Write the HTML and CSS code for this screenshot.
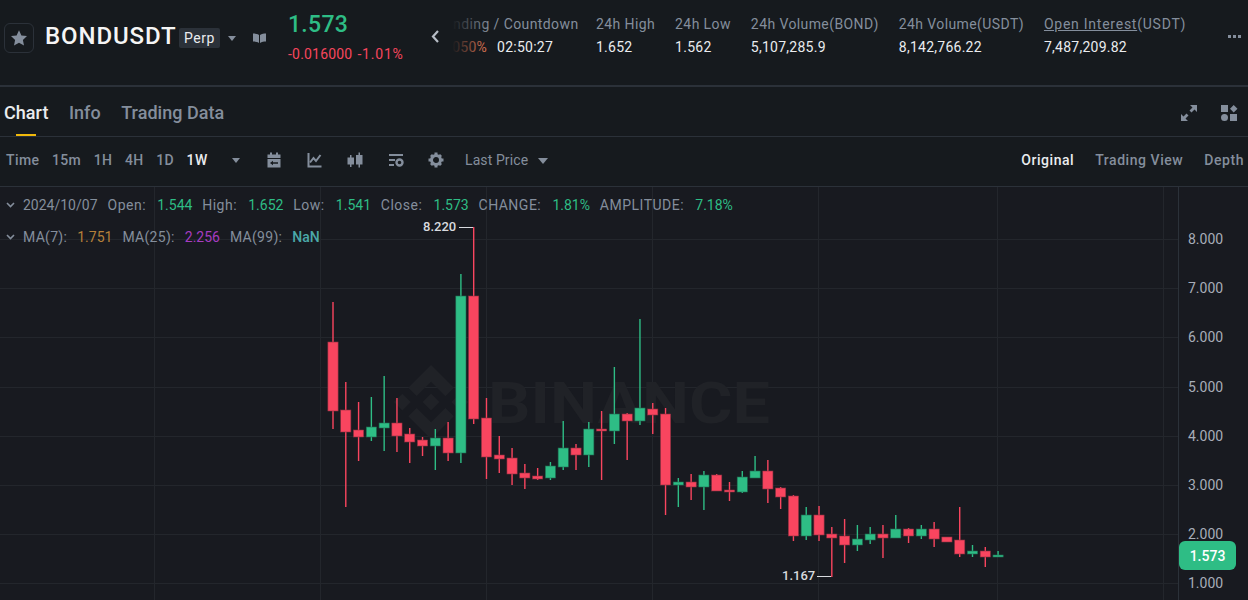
FILE: index.html
```html
<!DOCTYPE html>
<html>
<head>
    <meta charset="utf-8">
    <title>BONDUSDT Perp</title>
    <link rel="stylesheet" href="styles.css">
</head>
<body>
    <div class="ticker">
        <button class="star-btn">
            <svg width="18" height="18" viewBox="0 0 18 18"><path d="M9 1.2l2.4 5.2 5.6.7-4.1 3.9 1.1 5.6L9 13.8l-5 2.8 1.1-5.6L1 7.1l5.6-.7z" fill="#848e9c"/></svg>
        </button>
        <div class="symbol">BONDUSDT</div>
        <div class="perp">Perp</div>
        <div class="caret caret-header"></div>
        <svg class="book" width="13" height="10" viewBox="0 0 13 10"><path d="M0 0.5c2 0 4.300.3 6 1.500v8c-1.700-1.100-4-1.500-6-1.500zM13 .5c-2 0-4.300.3-6 1.500v8c1.700-1.100 4-1.500 6-1.500z" fill="#848e9c"/></svg>
        <div class="last-price">
            <div class="price-big">1.573</div>
            <div class="price-change"><span>-0.016000</span><span class="change-pct">-1.01%</span></div>
        </div>
        <svg class="back" width="9" height="13" viewBox="0 0 9 13"><path d="M7 1L2 6.500l5 5.500" fill="none" stroke="#b7bdc6" stroke-width="2.200"/></svg>
        <div class="stats-view">
            <div class="stats">
                <div class="stat stat-funding">
                    <div class="stat-name">Funding / Countdown</div>
                    <div class="stat-value"><span class="funding-rate">0.0050%</span><span>02:50:27</span></div>
                </div>
                <div class="stat">
                    <div class="stat-name">24h High</div>
                    <div class="stat-value">1.652</div>
                </div>
                <div class="stat">
                    <div class="stat-name">24h Low</div>
                    <div class="stat-value">1.562</div>
                </div>
                <div class="stat">
                    <div class="stat-name">24h Volume(BOND)</div>
                    <div class="stat-value">5,107,285.9</div>
                </div>
                <div class="stat">
                    <div class="stat-name">24h Volume(USDT)</div>
                    <div class="stat-value">8,142,766.22</div>
                </div>
                <div class="stat">
                    <div class="stat-name stat-oi"><u>Open Interest</u>(USDT)</div>
                    <div class="stat-value">7,487,209.82</div>
                </div>
            </div>
        </div>
        <div class="more"><i></i><i></i><i></i></div>
    </div>

    <div class="tabs">
        <div class="tab tab-active">Chart</div>
        <div class="tab">Info</div>
        <div class="tab">Trading Data</div>
        <div class="tab-icons">
            <svg width="16" height="16" viewBox="0 0 16 16"><path d="M9 0h7v7l-2.500-2.500-3 3-2-2 3-3zM7 16H0V9l2.500 2.500 3-3 2 2-3 3z" fill="#848e9c"/></svg>
            <svg width="17" height="16" viewBox="0 0 17 16"><path d="M0 0h7v7H0zM0 12.500a3.500 3.500 0 1 1 7 0 3.500 3.500 0 0 1-7 0zM9 9h7v7H9zM12.700 0l3.800 3.700-3.800 3.800-3.700-3.800z" fill="#848e9c"/></svg>
        </div>
    </div>

    <div class="toolbar">
        <div class="intervals">
            <span class="time-label">Time</span>
            <span>15m</span>
            <span>1H</span>
            <span>4H</span>
            <span>1D</span>
            <span class="interval-active">1W</span>
        </div>
        <div class="caret caret-interval"></div>
        <div class="tools">
            <svg width="16" height="16" viewBox="0 0 16 16"><path d="M1.500 2.500h2.500V.5h2v2h4v-2h2v2h2.500V6h-13zM1.500 7h13v8.500h-13zM4 11l3 2.300v-1.600h5v-1.500H7V8.700z" fill="#848e9c" fill-rule="evenodd"/></svg>
            <svg width="16" height="16" viewBox="0 0 16 16"><path d="M2.500 1v13.500H15.500" fill="none" stroke="#848e9c" stroke-width="2"/><path d="M4 10.500L7.500 6l2.500 3L14.500 3" fill="none" stroke="#848e9c" stroke-width="2"/></svg>
            <svg width="18" height="16" viewBox="0 0 18 16"><path d="M4 3h1.500v2.500H8v7H5.500V15H4v-2.500H1.500v-7H4zM12.500.5H14V3h2.500v9.500H14V15.500h-1.500v-3H10V3h2.500z" fill="#848e9c"/></svg>
            <svg width="16" height="16" viewBox="0 0 16 16"><path d="M1 2h14v2H1zM1 7h6v2H1zM1 12h5v2H1z" fill="#848e9c"/><circle cx="11.500" cy="10.500" r="3" fill="none" stroke="#848e9c" stroke-width="2.400"/></svg>
            <svg width="16" height="16" viewBox="0 0 16 16"><circle cx="8" cy="8" r="4.500" fill="none" stroke="#848e9c" stroke-width="3"/><path d="M6.500.5h3v3h-3zM6.500 12.500h3v3h-3zM.5 6.500h3v3h-3zM12.500 6.500h3v3h-3zM2 4l2-2 2 2-2 2zM10 4l2-2 2 2-2 2zM2 12l2-2 2 2-2 2zM10 12l2-2 2 2-2 2z" fill="#848e9c"/></svg>
        </div>
        <div class="price-type">Last Price</div>
        <div class="caret caret-price"></div>
        <div class="views">
            <span class="view-active">Original</span>
            <span>Trading View</span>
            <span>Depth</span>
        </div>
    </div>

    <div class="chart">
        <svg id="plot" class="plot" viewBox="0 187 1248 413" width="1248" height="413"></svg>
        <div class="legend">
            <div class="legend-row">
                <svg class="fold" width="9" height="6" viewBox="0 0 9 6"><path d="M1 1l3.500 3.500L8 1" fill="none" stroke="#848e9c" stroke-width="1.600"/></svg>
                <span class="legend-date">2024/10/07</span>
                <span class="lbl">Open:</span><span class="up">1.544</span>
                <span class="lbl">High:</span><span class="up">1.652</span>
                <span class="lbl">Low:</span><span class="up">1.541</span>
                <span class="lbl">Close:</span><span class="up">1.573</span>
                <span class="lbl">CHANGE:</span><span class="up">1.81%</span>
                <span class="lbl">AMPLITUDE:</span><span class="up">7.18%</span>
            </div>
            <div class="legend-row legend-ma">
                <svg class="fold" width="9" height="6" viewBox="0 0 9 6"><path d="M1 1l3.500 3.500L8 1" fill="none" stroke="#848e9c" stroke-width="1.600"/></svg>
                <span class="lbl">MA(7):</span><span class="ma7">1.751</span>
                <span class="lbl">MA(25):</span><span class="ma25">2.256</span>
                <span class="lbl">MA(99):</span><span class="ma99">NaN</span>
            </div>
        </div>
    </div>
    <script src="chart.js"></script>
</body>
</html>
```

FILE: styles.css
```css
* {
    box-sizing: border-box;
}

html, body {
    margin: 0;
    height: 600px;
    overflow: hidden;
}

body {
    font-family: Roboto, "Liberation Sans", sans-serif;
    font-size: 14px;
    background-color: #161a1e;
    color: #eaecef;
}

/* top ticker */
.ticker {
    display: flex;
    align-items: center;
    height: 87px;
    padding-left: 4px;
    border-bottom: 2px solid #2b3139;
}

.star-btn {
    display: flex;
    align-items: center;
    justify-content: center;
    width: 30px;
    height: 30px;
    margin-top: -10px;
    padding: 0;
    background: none;
    border: 1px solid #2b3139;
    border-radius: 6px;
}

.symbol {
    margin: -14px 0 0 11px;
    width: 134px;
    font-size: 24px;
    font-weight: 500;
    letter-spacing: 0.9px;
    color: #f5f5f5;
    white-space: nowrap;
}

.perp {
    width: 41px;
    height: 20px;
    margin-top: -10px;
    line-height: 20px;
    text-align: center;
    letter-spacing: 0.6px;
    background-color: #2b3139;
    border-radius: 2px;
}

.caret {
    width: 0;
    height: 0;
    border-left: 4.5px solid transparent;
    border-right: 4.5px solid transparent;
    border-top: 5px solid #848e9c;
}

.caret-header {
    margin: -9px 0 0 8px;
}

.book {
    margin: -10px 0 0 17px;
}

.last-price {
    margin: -12px 0 0 22px;
    width: 143px;
}

.price-big {
    font-size: 23px;
    font-weight: 500;
    letter-spacing: 0.3px;
    color: #2ebd85;
    line-height: 28px;
}

.price-change {
    display: flex;
    gap: 5px;
    margin-top: 7px;
    letter-spacing: 0.2px;
    color: #f6465d;
}

.change-pct {
    letter-spacing: 0.8px;
}

.back {
    margin-top: -12px;
}

.stats-view {
    position: relative;
    width: 764px;
    margin: -14px 0 0 8px;
    overflow: hidden;
}

.stats-view::before {
    content: "";
    position: absolute;
    left: 0;
    top: 0;
    bottom: 0;
    width: 42px;
    background: linear-gradient(to right, #161a1e 10%, rgba(22, 26, 30, 0));
}

.stats {
    display: flex;
    gap: 20px;
    margin-left: -11px;
    white-space: nowrap;
}

.stat-name {
    color: #848e9c;
    line-height: 18px;
    margin-bottom: 5px;
    letter-spacing: 0.4px;
}

.stat-oi {
    letter-spacing: 0.75px;
}

.stat-value {
    line-height: 18px;
    letter-spacing: 0.25px;
}

.stat-funding {
    flex: 0 0 139px;
    width: 139px;
}

.stat-funding .stat-name {
    text-align: right;
    padding-right: 2px;
}

.stat-funding .stat-value {
    margin-left: -5px;
}

.funding-rate {
    color: #f0805a;
    margin-right: 10px;
}

.more {
    display: flex;
    gap: 2px;
    margin: -12px 7px 0 auto;
}

.more i {
    width: 3px;
    height: 3px;
    background-color: #848e9c;
}

/* Chart / Info / Trading Data */
.tabs {
    display: flex;
    align-items: center;
    gap: 20.5px;
    height: 50px;
    padding: 2px 0 0 4px;
    border-bottom: 1px solid #2b3139;
    font-size: 18px;
    font-weight: 500;
    letter-spacing: 0.03px;
    color: #848e9c;
}

.tab {
    position: relative;
}

.tab-active {
    color: #eaecef;
}

.tab-active::after {
    content: "";
    position: absolute;
    left: 12px;
    bottom: -13px;
    width: 20px;
    height: 2px;
    background-color: #f0b90b;
}

.tab-icons {
    display: flex;
    gap: 24px;
    margin-left: auto;
    padding-right: 10px;
}

/* interval row */
.toolbar {
    display: flex;
    align-items: center;
    height: 50px;
    padding: 0 0 3px 6px;
    border-bottom: 1px solid #2b3139;
    color: #848e9c;
    font-weight: 500;
}

.intervals {
    display: flex;
    gap: 12.5px;
    width: 226px;
    letter-spacing: 0.4px;
}

.interval-active {
    color: #eaecef;
}

.caret-interval {
    border-left-width: 4px;
    border-right-width: 4px;
}

.tools {
    display: flex;
    gap: 24px;
    margin-left: 26px;
}

.price-type {
    margin-left: 21px;
    font-weight: 400;
    letter-spacing: 0.1px;
}

.caret-price {
    margin: 1px 0 0 10px;
    border-left-width: 5px;
    border-right-width: 5px;
    border-top-width: 6px;
}

.views {
    display: flex;
    gap: 21px;
    margin-left: auto;
    padding-right: 4px;
    letter-spacing: 0.55px;
}

.view-active {
    color: #eaecef;
}

/* plot area */
.chart {
    position: relative;
    height: 413px;
    background-color: #181a20;
}

.plot {
    position: absolute;
    left: 0;
    top: 0;
    display: block;
}

.plot text {
    font-family: Roboto, "Liberation Sans", sans-serif;
}

.grid-line {
    stroke: #23262c;
    stroke-width: 1;
}

.axis-line {
    stroke: #2b3139;
    stroke-width: 1;
}

.mark {
    fill: #202227;
}

.mark-text {
    font-size: 58px;
    font-weight: 700;
}

.wick-up, .body-up {
    fill: #2ebd85;
}

.wick-down, .body-down {
    fill: #f9455f;
}

.body-up {
    stroke: #1e6a50;
    stroke-width: 0.6;
}

.body-down {
    stroke: #8a3040;
    stroke-width: 0.6;
}

.axis-label {
    font-size: 14px;
    fill: #a7adb8;
}

.peak-label {
    font-size: 13px;
    font-weight: 500;
    fill: #d8dadf;
}

.peak-line {
    stroke: #d8dadf;
    stroke-width: 1;
}

.tag {
    fill: #2ebd85;
}

.tag-text {
    font-size: 14px;
    font-weight: 500;
    fill: #ffffff;
    text-anchor: middle;
}

.legend {
    position: absolute;
    left: 6px;
    top: 9px;
    color: #848e9c;
}

.legend-row {
    display: flex;
    align-items: center;
    height: 18px;
    margin-bottom: 14px;
    white-space: nowrap;
}

.fold {
    margin-right: 8px;
}

.legend-date {
    margin-right: 10px;
}

.lbl {
    margin-right: 11.2px;
    letter-spacing: 0.5px;
}

.legend-ma .lbl {
    margin-right: 10px;
    letter-spacing: 0.3px;
}

.up {
    color: #2ebd85;
    margin-right: 9.8px;
}

.ma7 {
    color: #b5803a;
    margin-right: 10px;
}

.ma25 {
    color: #a63cc0;
    margin-right: 10px;
}

.ma99 {
    color: #4ba8a8;
    font-weight: 500;
}
```

FILE: chart.js
```js
// weekly candles, page pixels: [wick top, body top, body bottom, wick bottom, up?]
const candles = [
    [302, 342, 411, 429, 0], [382, 410, 432, 507, 0], [402, 430, 437, 461, 0],
    [397, 427, 437, 441, 1], [376, 423, 428, 451, 1], [398, 423, 436, 452, 0],
    [428, 434, 442, 463, 0], [437, 440, 446, 456, 0], [429, 438, 446, 470, 1],
    [422, 438, 453, 461, 0], [274, 296, 453, 463, 1], [227, 296, 419, 424, 0],
    [398, 418, 457, 479, 0], [436, 455, 459, 473, 0], [448, 458, 474, 485, 0],
    [464, 473, 478, 489, 0], [468, 476, 479, 480, 0], [462, 466, 478, 480, 1],
    [421, 448, 467, 470, 1], [444, 448, 455, 470, 0], [422, 429, 455, 467, 1],
    [411, 429, 431, 480, 0], [367, 414, 431, 444, 1], [413, 414, 421, 460, 0],
    [319, 408, 421, 425, 1], [403, 409, 415, 434, 0], [408, 414, 485, 515, 0],
    [478, 482, 485, 507, 1], [474, 482, 487, 500, 0], [471, 475, 487, 510, 1],
    [474, 475, 491, 491, 0], [482, 490, 492, 501, 0], [471, 477, 492, 493, 1],
    [456, 471, 478, 478, 1], [460, 471, 489, 503, 0], [487, 488, 497, 509, 0],
    [495, 496, 536, 541, 0], [507, 515, 536, 540, 1], [506, 515, 535, 541, 0],
    [527, 534, 538, 577, 0], [519, 536, 545, 563, 0], [525, 539, 545, 551, 1],
    [527, 534, 540, 544, 1], [525, 534, 538, 558, 0], [515, 529, 538, 538, 1],
    [528, 529, 536, 543, 0], [525, 529, 536, 539, 1], [522, 529, 539, 547, 0],
    [537, 537, 542, 542, 0], [507, 540, 554, 557, 0], [545, 551, 554, 557, 1],
    [547, 551, 557, 567, 0], [551, 555, 557, 557, 1]
];

const plot = document.getElementById("plot");

const add = (name, attrs, parent = plot, text) => {
    const el = document.createElementNS("http://www.w3.org/2000/svg", name);
    for (const key in attrs) {
        el.setAttribute(key, attrs[key]);
    }
    if (text) {
        el.textContent = text;
    }
    parent.appendChild(el);
    return el;
};

// grid
[154, 320, 486, 652, 818, 997, 1163].forEach((x) => {
    add("line", { x1: x + 0.5, x2: x + 0.5, y1: 187, y2: 600, class: "grid-line" });
});
const ticks = ["8.000", "7.000", "6.000", "5.000", "4.000", "3.000", "2.000", "1.000"];
const tickY = (i) => 239 + i * 49.2;
ticks.forEach((label, i) => {
    const y = Math.round(tickY(i)) + 0.5;
    add("line", { x1: 0, x2: 1178, y1: y, y2: y, class: "grid-line" });
});

// watermark
const mark = add("g", { class: "mark" });
const logo = add("g", { transform: "translate(394 365) scale(0.585)" }, mark);
[
    "M38.73 53.2L63.3 28.63l24.59 24.58 14.3-14.3L63.3 0 24.42 38.88l14.31 14.32z",
    "M0 63.31l14.3-14.31 14.31 14.31-14.31 14.3z",
    "M38.73 73.41L63.3 97.98l24.59-24.57 14.31 14.29-38.9 38.91-38.88-38.88-.02-.02 14.33-14.3z",
    "M98.28 63.31l14.3-14.31 14.31 14.31-14.31 14.3z",
    "M77.83 63.3l-14.51-14.52-14.52 14.52 14.51 14.5 14.51-14.5z"
].forEach((d) => add("path", { d }, logo));
add("text", { x: 488, y: 423, class: "mark-text", textLength: 282, lengthAdjust: "spacingAndGlyphs" }, mark, "BINANCE");

// candles
candles.forEach(([top, open, close, bottom, up], i) => {
    const x = 333 + i * 12.79;
    const side = up ? "up" : "down";
    add("rect", { x: x - 0.7, y: top, width: 1.4, height: bottom - top, class: "wick-" + side });
    add("rect", { x: x - 5.1, y: open, width: 10.2, height: Math.max(close - open, 1), class: "body-" + side });
});

// high / low markers
add("text", { x: 423, y: 231, class: "peak-label" }, plot, "8.220");
add("line", { x1: 459, x2: 473, y1: 227.5, y2: 227.5, class: "peak-line" });
add("text", { x: 782, y: 580, class: "peak-label" }, plot, "1.167");
add("line", { x1: 817, x2: 831, y1: 576.5, y2: 576.5, class: "peak-line" });

// price axis
add("line", { x1: 1178.5, x2: 1178.5, y1: 187, y2: 600, class: "axis-line" });
ticks.forEach((label, i) => {
    add("text", { x: 1188, y: tickY(i) + 5, class: "axis-label" }, plot, label);
});
add("rect", { x: 1179, y: 541, width: 57, height: 29, rx: 6, class: "tag" });
add("text", { x: 1207.5, y: 561, class: "tag-text" }, plot, "1.573");
```
